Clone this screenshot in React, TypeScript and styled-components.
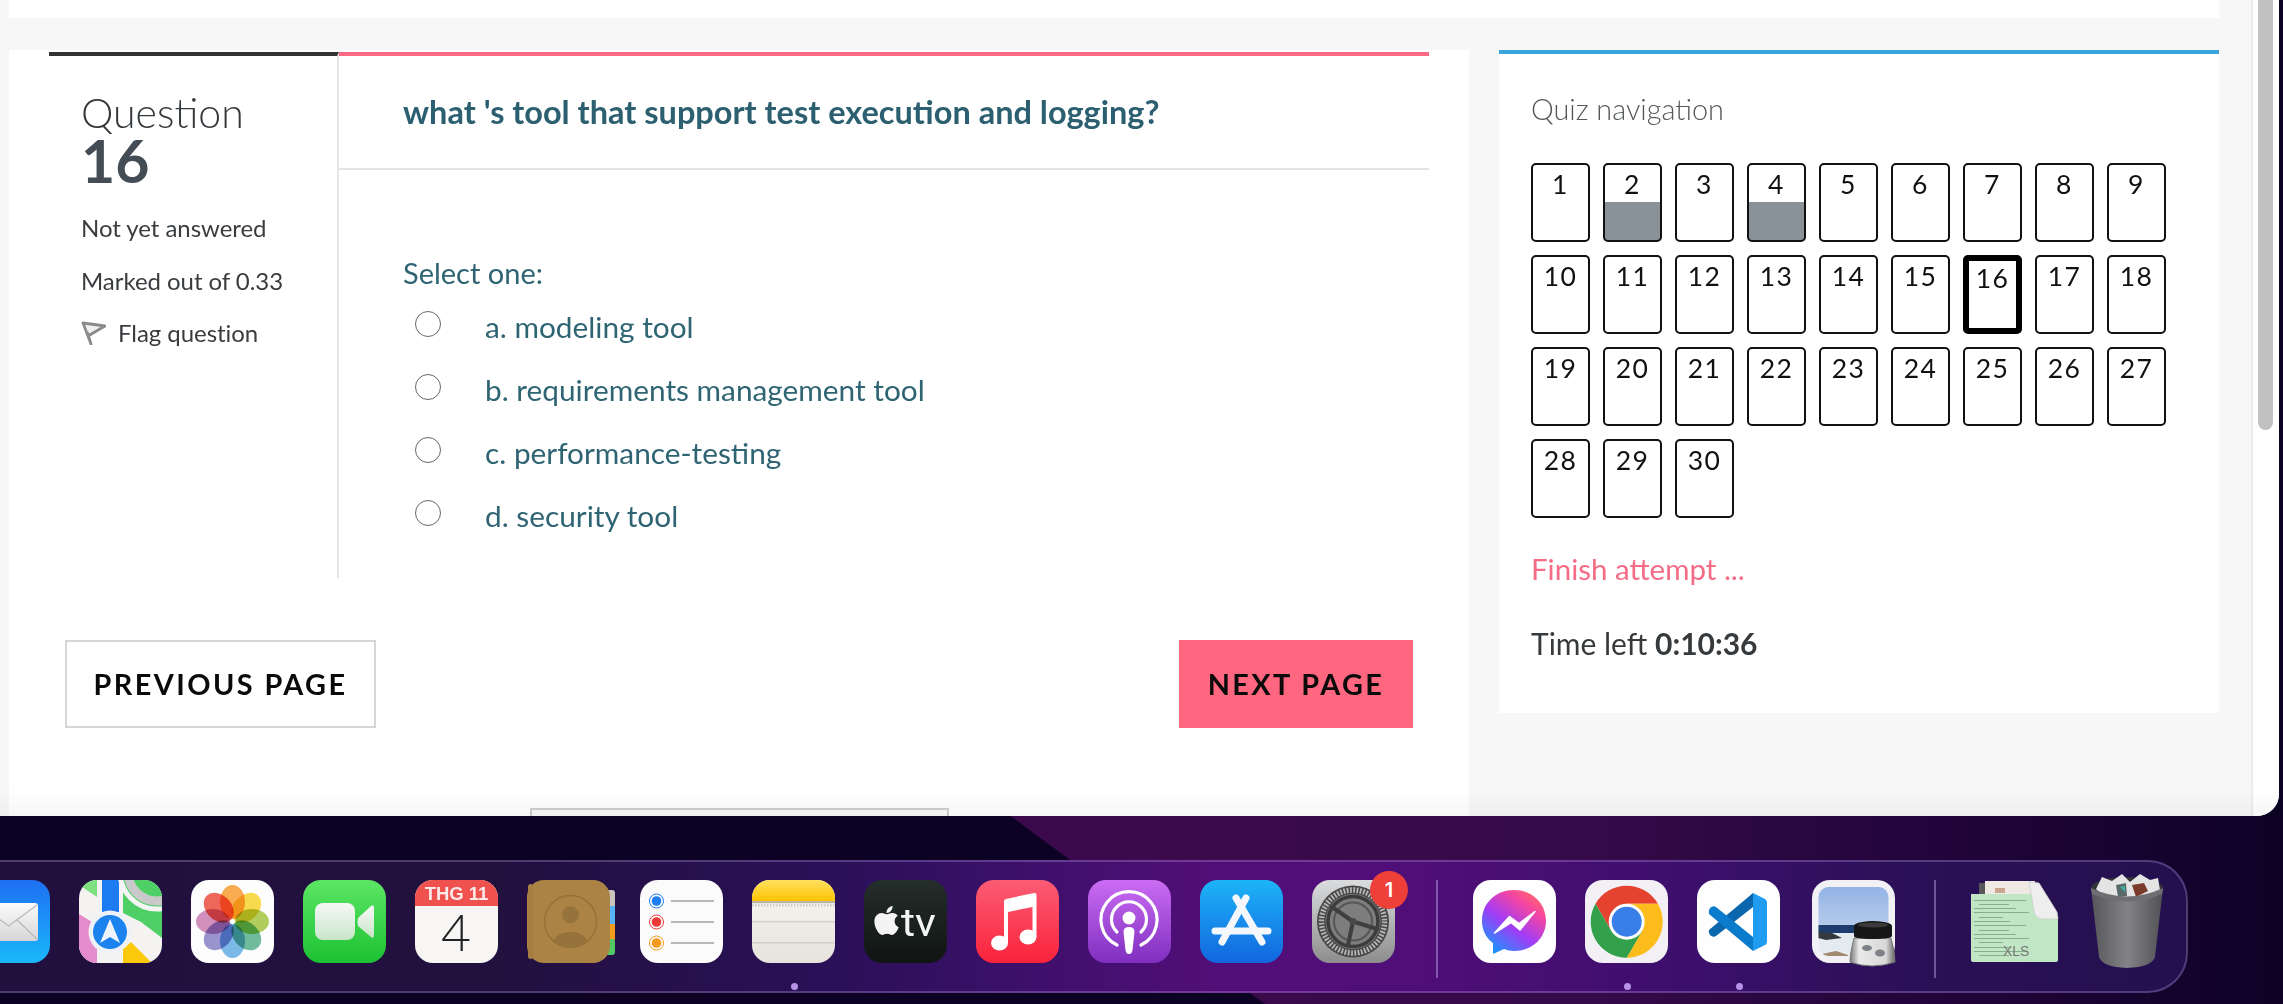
import React from "react";
import styled, { createGlobalStyle } from "styled-components";

const Global = createGlobalStyle`
  html, body { margin: 0; padding: 0; overflow: hidden; background: #0b0224; }
  body { font-family: Lato, "Liberation Sans", sans-serif; }
  * { box-sizing: border-box; }
`;

const Screen = styled.div`
  width: 2283px; height: 1004px; display: flex; flex-direction: column; overflow: hidden;
`;
const Browser = styled.div`
  position: relative; width: 2279px; height: 816px; flex: none; display: flex; overflow: hidden;
  border-bottom-right-radius: 22px; background: #f7f7f7;
  &::after {
    content: ""; position: absolute; left: 0; right: 0; bottom: 0; height: 26px; pointer-events: none;
    background: linear-gradient(rgba(0,0,0,0), rgba(0,0,0,.035));
  }
`;
const Page = styled.div`
  flex: 1; min-width: 0; padding: 0 32px 0 9px; display: flex; flex-direction: column; gap: 32px;
`;
const TopStrip = styled.div`height: 18px; background: #fff; flex: none;`;
const Columns = styled.div`flex: 1; min-height: 0; display: flex; gap: 30px; align-items: flex-start;`;
const Gutter = styled.div`width: 28px; flex: none; background: #fff; border-left: 2px solid #ececec; padding-left: 5px;`;
const Thumb = styled.div`width: 15px; height: 430px; background: #c1c1c1; border-radius: 0 0 8px 8px;`;

const MainCard = styled.main`
  width: 1460px; height: 766px; flex: none; background: #fff; overflow: hidden; padding: 2px 40px 0 40px;
`;
const Question = styled.section`display: flex; height: 526px;`;
const Info = styled.aside`
  width: 290px; flex: none; border-top: 4px solid #333; border-right: 2px solid #e6e6e6;
  padding: 37px 0 0 32px; color: #373a3c;
`;
const QLabel = styled.div`font-size: 41px; font-weight: 300; line-height: 40px; color: #33383c;`;
const QNumber = styled.div`font-size: 59px; font-weight: 700; line-height: 56px; color: #444c55; margin-bottom: 24px;`;
const Meta = styled.div`font-size: 24px; line-height: 30px; letter-spacing: -.05px; margin-bottom: 22.5px; display: flex; align-items: center; gap: 12px; color: #3a3d40; white-space: nowrap;`;
const Body = styled.div`flex: 1; min-width: 0; display: flex; flex-direction: column; border-top: 4px solid #fb6a82;`;
const QTitle = styled.h2`
  margin: 0; height: 114px; flex: none; padding: 38px 0 0 64px; border-bottom: 2px solid #e3e3e3;
  font-size: 32.5px; line-height: 36px; font-weight: 700; color: #2c6070; white-space: nowrap;
`;
const Answer = styled.div`padding: 85px 0 0 64px; color: #2f6473;`;
const Prompt = styled.div`font-size: 29px; line-height: 36px; margin-bottom: 4px;`;
const Choice = styled.label`display: flex; height: 63px; align-items: center; font-size: 29.8px;`;
const Radio = styled.input`
  appearance: none; width: 26px; height: 26px; margin: -5px 44px 0 12px; flex: none;
  border: 1.5px solid #666; border-radius: 50%; background: #fff;
`;
const Actions = styled.div`display: flex; justify-content: space-between; padding: 0 16px 0 16px; margin-top: 62px;`;
const ActionButton = styled.button<{ $primary?: boolean }>`
  height: 88px; padding: 0; font-family: inherit; font-size: 28.8px; font-weight: 700; letter-spacing: 2.45px; color: #0a0a0a;
  width: ${(p) => (p.$primary ? "234px" : "311px")};
  border: ${(p) => (p.$primary ? "none" : "2px solid #d6d6d6")};
  background: ${(p) => (p.$primary ? "#ff667f" : "#fff")};
`;
const PeekBox = styled.div`
  width: 419px; height: 40px; margin: 80px auto 0; border: 2px solid #cfcfcf; background: #f8f8f8;
`;

const NavCard = styled.aside`
  width: 720px; height: 663px; flex: none; background: #fff; border-top: 4px solid #3aa4dc; padding: 37px 0 0 32px;
`;
const NavTitle = styled.h3`margin: 0 0 36px; font-size: 28.8px; line-height: 36px; font-weight: 300; color: #55595c;`;
const NavGrid = styled.div`display: grid; grid-template-columns: repeat(9, 59px); gap: 13px;`;
const NavCell = styled.div<{ $state?: "done" | "current" }>`
  height: 79px; text-align: center; font-size: 26.5px; line-height: 34px; letter-spacing: 1.5px; color: #111; border-radius: 5px;
  padding-top: ${(p) => (p.$state === "current" ? "0" : "2px")};
  margin: 0;
  border: ${(p) => (p.$state === "current" ? "6px solid #000" : "2px solid #111")};
  background: ${(p) => (p.$state === "done" ? "linear-gradient(#fff 50%, #8a9299 50%)" : "#fff")};
`;
const FinishLink = styled.a`display: block; margin-top: 33px; font-size: 29.5px; line-height: 36px; color: #f56c86;`;
const TimeLeft = styled.div`margin-top: 38px; font-size: 30px; line-height: 36px; color: #373a3c; b { font-weight: 700; }`;

const Wallpaper = styled.div`
  flex: 1; min-height: 0; display: flex; justify-content: flex-end; padding: 44px 95px 0 0; overflow: hidden;
  background:
    linear-gradient(36.5deg, #0b0224 49.8%, rgba(11,2,36,0) 49.9%),
    linear-gradient(90deg, #3a0a4a 0%, #3c0a4c 50%, #340a48 70%, #1f0438 87%, #0e0226 100%);
`;
const Dock = styled.div`
  flex: none; height: 133px; display: flex; gap: 29px; align-items: flex-start; padding: 18px 22px 0 24px;
  border: 2px solid rgba(190,160,230,.3); border-right-width: 2px; border-radius: 0 40px 40px 0;
  background: linear-gradient(90deg, #21103d 0, #22103f 25%, #2a1058 40%, #3a1068 47%, #520e78 57%, #4f0e78 66%, #3c0f6c 78%, #2a1056 88%, #24104e 100%);
`;
const Slot = styled.div<{ $w?: number; $shift?: number }>`
  position: relative; flex: none; height: 83px; width: ${(p) => p.$w ?? 83}px; margin-left: ${(p) => p.$shift ?? 0}px;
  svg { display: block; overflow: visible; }
`;
const RunDot = styled.span`
  position: absolute; left: 50%; top: 103px; width: 7px; height: 7px; margin-left: -3px; border-radius: 50%; background: #b592e6;
`;
const Badge = styled.span`
  position: absolute; right: -13px; top: -9px; width: 38px; height: 38px; border-radius: 50%; background: #ee3f39;
  color: #fff; font: 600 20px/38px Inter, "Liberation Sans", sans-serif; text-align: center;
`;
const DockRule = styled.div<{ $before: number; $after: number }>`
  flex: none; width: 2px; height: 98px; margin: 0 ${(p) => p.$after - 29}px 0 ${(p) => p.$before - 29}px; background: rgba(200,170,240,.45);
`;

const Ico: React.FC<{ w?: number; h?: number; box?: string; children: React.ReactNode }> = ({ w = 83, h = 83, box, children }) => (
  <svg width={w} height={h} viewBox={box ?? `0 0 ${w} ${h}`} xmlns="http://www.w3.org/2000/svg">{children}</svg>
);

const Mail = () => (
  <Ico>
    <defs>
      <linearGradient id="mailG" x1="0" y1="0" x2="0" y2="1"><stop offset="0" stopColor="#1e6ff2" /><stop offset="1" stopColor="#1ab8fb" /></linearGradient>
      <linearGradient id="mailE" x1="0" y1="0" x2="0" y2="1"><stop offset="0" stopColor="#fbfbfb" /><stop offset="1" stopColor="#d6d6d6" /></linearGradient>
    </defs>
    <rect width="83" height="83" rx="18" fill="url(#mailG)" />
    <rect x="12" y="23" width="59" height="38" rx="3" fill="url(#mailE)" />
    <path d="M13 25 L41.5 46 L70 25 M13 59 L33 40 M70 59 L50 40" fill="none" stroke="#b8b8b8" strokeWidth="1.2" />
  </Ico>
);

const Maps = () => (
  <Ico>
    <defs><clipPath id="mapC"><rect width="83" height="83" rx="18" /></clipPath></defs>
    <g clipPath="url(#mapC)">
      <rect width="83" height="83" fill="#f4f3f2" />
      <path d="M0 0 H18 V17 L0 5 Z" fill="#7ee07f" />
      <path d="M44 0 H83 V58 L62 42 L44 33 Z" fill="#4fd066" />
      <path d="M0 34 L18 45 V83 H0 Z" fill="#e48bcb" />
      <path d="M44 69 L52 62 L73 83 H44 Z" fill="#fdc90c" />
      <path d="M23 0 H40 V32 H23 Z" fill="#1d7bf2" />
      <circle cx="78" cy="-8" r="29" fill="none" stroke="#c9c9c9" strokeWidth="9" />
      <circle cx="78" cy="-8" r="37" fill="none" stroke="#f5f5f5" strokeWidth="5" />
      <circle cx="31" cy="52" r="21.5" fill="#eef2f6" />
      <circle cx="31" cy="52" r="17" fill="#1c82ee" />
      <path d="M31 39 L41 63 L31 57 L21 63 Z" fill="#eef4fb" />
    </g>
  </Ico>
);

const Photos = () => {
  const petals = ["#f9a23e", "#f8d63c", "#a9c94a", "#5fb490", "#6cb2e4", "#8f88c9", "#cb84b4", "#ee5548"];
  return (
    <Ico>
      <rect width="83" height="83" rx="18" fill="#fdfdfd" />
      <g style={{ isolation: "isolate" }}>
        {petals.map((c, i) => (
          <ellipse key={c} cx="41.5" cy="22" rx="12.5" ry="17" fill={c} opacity=".9"
            style={{ mixBlendMode: "multiply" }} transform={`rotate(${i * 45} 41.5 41.5)`} />
        ))}
      </g>
      <circle cx="41.5" cy="41.5" r="1.4" fill="#fff" />
    </Ico>
  );
};

const FaceTime = () => (
  <Ico>
    <defs>
      <linearGradient id="ftG" x1="0" y1="0" x2="0" y2="1"><stop offset="0" stopColor="#5ce664" /><stop offset="1" stopColor="#1cc133" /></linearGradient>
      <linearGradient id="ftW" x1="0" y1="0" x2="0" y2="1"><stop offset="0" stopColor="#f8f8f8" /><stop offset="1" stopColor="#c8e6c8" /></linearGradient>
    </defs>
    <rect width="83" height="83" rx="18" fill="url(#ftG)" />
    <rect x="12" y="23" width="40" height="37" rx="8" fill="url(#ftW)" />
    <path d="M55 38 L68 26 Q71 24 71 28 V55 Q71 59 68 57 L55 46 Q54 42 55 38 Z" fill="url(#ftW)" />
  </Ico>
);

const Calendar = () => (
  <Ico>
    <defs><clipPath id="calC"><rect width="83" height="83" rx="18" /></clipPath></defs>
    <g clipPath="url(#calC)">
      <rect width="83" height="83" fill="#f7f6f4" />
      <rect width="83" height="26" fill="#ef524e" />
    </g>
    <text x="41.5" y="20" textAnchor="middle" fontFamily="Liberation Sans, sans-serif" fontWeight="700" fontSize="18.5" fill="#fbeaea">THG 11</text>
    <text x="41" y="71" textAnchor="middle" fontFamily="Lato, sans-serif" fontWeight="300" fontSize="52" fill="#222">4</text>
  </Ico>
);

const Contacts = () => (
  <Ico w={88}>
    <rect x="78" y="10" width="10" height="18" rx="3" fill="#c9c5bd" />
    <rect x="78" y="26" width="10" height="20" fill="#58b2f3" />
    <rect x="78" y="44" width="10" height="16" fill="#f29b1d" />
    <rect x="78" y="59" width="10" height="16" rx="3" fill="#52c766" />
    <rect width="83" height="83" rx="17" fill="#ab8445" />
    <rect x="1" y="4" width="5" height="75" rx="2.5" fill="#a57f41" />
    <circle cx="43.5" cy="41.5" r="26" fill="none" stroke="#957239" strokeWidth="1.5" />
    <circle cx="43.5" cy="35" r="8.5" fill="#96733a" />
    <path d="M27 61 C30 49 57 49 60 61 A26 26 0 0 1 27 61 Z" fill="#96733a" />
  </Ico>
);

const Reminders = () => (
  <Ico>
    <rect width="83" height="83" rx="18" fill="#fbfbfb" />
    {[["#1c7ef2", 21], ["#ee3a35", 42], ["#f59a1c", 63]].map(([c, y]) => (
      <g key={c as string}>
        <circle cx="16.5" cy={y as number} r="7" fill="#fff" stroke={c as string} strokeWidth="1" />
        <circle cx="16.5" cy={y as number} r="4.8" fill={c as string} />
        <rect x="31" y={(y as number) - 1} width="43" height="2" fill="#b8b8b8" />
      </g>
    ))}
  </Ico>
);

const Notes = () => (
  <Ico>
    <defs>
      <clipPath id="noC"><rect width="83" height="83" rx="18" /></clipPath>
      <linearGradient id="noY" x1="0" y1="0" x2="0" y2="1"><stop offset="0" stopColor="#ffe060" /><stop offset="1" stopColor="#fdc400" /></linearGradient>
      <linearGradient id="noP" x1="0" y1="0" x2="0" y2="1"><stop offset="0" stopColor="#f9f7f3" /><stop offset="1" stopColor="#e6e2dc" /></linearGradient>
    </defs>
    <g clipPath="url(#noC)">
      <rect width="83" height="83" fill="url(#noP)" />
      <rect width="83" height="21" fill="url(#noY)" />
      <rect y="21" width="83" height="2" fill="#b9b4a8" />
      <line x1="0" x2="83" y1="25" y2="25" stroke="#cfcbc4" strokeWidth="3" strokeDasharray="1.5 1.5" />
      <rect y="41" width="83" height="1.5" fill="#d6d3cd" />
      <rect y="62" width="83" height="1.5" fill="#d2cfc9" />
    </g>
  </Ico>
);

const AppleTv = () => (
  <Ico>
    <defs><linearGradient id="tvG" x1="0" y1="0" x2="0" y2="1"><stop offset="0" stopColor="#242e2b" /><stop offset="1" stopColor="#101413" /></linearGradient></defs>
    <rect width="83" height="83" rx="18" fill="url(#tvG)" />
    <svg x="10" y="24" width="25" height="33" viewBox="0 0 384 512">
      <path fill="#f4f4f4" d="M318.7 268.7c-.2-36.7 16.4-64.4 50-84.8-18.8-26.9-47.2-41.7-84.7-44.6-35.5-2.8-74.3 20.7-88.5 20.7-15 0-49.4-19.7-76.4-19.7C63.3 141.2 4 184.8 4 273.5q0 39.3 14.4 81.2c12.8 36.7 59 126.7 107.2 125.2 25.2-.6 43-17.9 75.8-17.9 31.8 0 48.3 17.9 76.4 17.9 48.6-.7 90.4-82.5 102.6-119.3-65.2-30.7-61.7-90-61.7-91.9zm-56.6-164.2c27.3-32.4 24.8-61.9 24-72.5-24.1 1.4-52 16.4-67.9 34.9-17.5 19.8-27.8 44.3-25.6 71.9 26.1 2 49.9-11.4 69.5-34.3z" />
    </svg>
    <text x="37" y="56" fontFamily="Roboto, sans-serif" fontWeight="400" fontSize="39" fill="#f4f4f4" textLength="35" lengthAdjust="spacingAndGlyphs">tv</text>
  </Ico>
);

const Music = () => (
  <Ico>
    <defs><linearGradient id="muG" x1="0" y1="0" x2="0" y2="1"><stop offset="0" stopColor="#fb5c74" /><stop offset="1" stopColor="#fa233b" /></linearGradient></defs>
    <rect width="83" height="83" rx="18" fill="url(#muG)" />
    <path d="M28 21 Q28 19.5 30 19 L58 13 Q60.5 12.6 60.5 15 V57 H56.5 V27 L32 32 V63 H28 Z" fill="#fff" />
    <ellipse cx="23.5" cy="63" rx="8.5" ry="7.5" fill="#fff" />
    <ellipse cx="52" cy="57" rx="8.5" ry="7.5" fill="#fff" />
  </Ico>
);

const Podcasts = () => (
  <Ico>
    <defs><linearGradient id="poG" x1="0" y1="0" x2="0" y2="1"><stop offset="0" stopColor="#cb6cf3" /><stop offset="1" stopColor="#7f2fc0" /></linearGradient></defs>
    <rect width="83" height="83" rx="18" fill="url(#poG)" />
    <g fill="none" stroke="#fff" strokeWidth="3.2" strokeLinecap="round">
      <path d="M29 65 A28 28 0 1 1 53 65" />
      <path d="M29 52 A17.5 17.5 0 1 1 53 52" />
    </g>
    <circle cx="41" cy="38" r="6.5" fill="#fff" />
    <path d="M35.5 52 Q35.5 47 41 47 Q46.5 47 46.5 52 L44.5 70 Q44 74 41 74 Q38 74 37.5 70 Z" fill="#fff" />
  </Ico>
);

const AppStore = () => (
  <Ico>
    <defs><linearGradient id="asG" x1="0" y1="0" x2="0" y2="1"><stop offset="0" stopColor="#1db4f8" /><stop offset="1" stopColor="#1266de" /></linearGradient></defs>
    <rect width="83" height="83" rx="18" fill="url(#asG)" />
    <g stroke="#f4f8fd" strokeWidth="7" strokeLinecap="round">
      <line x1="46" y1="18" x2="22" y2="62" />
      <line x1="36" y1="18" x2="62" y2="62" />
      <line x1="15" y1="51" x2="68" y2="51" />
    </g>
  </Ico>
);

const Settings = () => (
  <Ico>
    <defs>
      <linearGradient id="seG" x1="0" y1="0" x2="0" y2="1"><stop offset="0" stopColor="#dadcdd" /><stop offset="1" stopColor="#8d8d8d" /></linearGradient>
    </defs>
    <rect width="83" height="83" rx="18" fill="url(#seG)" />
    <circle cx="41" cy="41.5" r="36" fill="#474747" />
    <circle cx="41" cy="41.5" r="31.5" fill="none" stroke="#b5b5b5" strokeWidth="5.5" strokeDasharray="1.8 1.5" />
    <circle cx="41" cy="41.5" r="27.5" fill="#7d7d7d" />
    <circle cx="41" cy="41.5" r="25" fill="none" stroke="#3c3c3c" strokeWidth="3.5" />
    <circle cx="41" cy="41.5" r="19" fill="none" stroke="#555" strokeWidth="2" />
    <g stroke="#3f3f3f" strokeWidth="4" strokeLinecap="round">
      <line x1="41" y1="41.5" x2="20" y2="27" />
      <line x1="41" y1="41.5" x2="65" y2="49" />
      <line x1="41" y1="41.5" x2="36" y2="65" />
    </g>
    <circle cx="41" cy="41.5" r="3.5" fill="#4a4a4a" />
  </Ico>
);

const Messenger = () => (
  <Ico>
    <defs><linearGradient id="meG" x1="0.15" y1="1" x2="0.85" y2="0.05"><stop offset="0" stopColor="#0a9dff" /><stop offset="0.45" stopColor="#a23cf6" /><stop offset="0.8" stopColor="#f6469f" /><stop offset="1" stopColor="#ff6a6a" /></linearGradient></defs>
    <rect width="83" height="83" rx="18" fill="#fefefe" />
    <path d="M41 10 C23 10 9 23 9 41 C9 50 13 58 20 63 V74 L31 69 C34 70 37 71 41 71 C59 71 73 58 73 41 C73 23 59 10 41 10 Z" fill="url(#meG)" />
    <path d="M21.5 53 L36.5 36.5 L46 43.5 L62 31.5 L47 50 L38 42.5 Z" fill="#fff" strokeLinejoin="round" stroke="#fff" strokeWidth="1.5" />
  </Ico>
);

const Chrome = () => (
  <Ico>
    <rect width="83" height="83" rx="18" fill="#f2f0f5" />
    <path d="M10.5 23.7 A36 36 0 0 1 72.9 23.7 L41.7 23.7 L26.1 50.7 Z" fill="#e5432f" />
    <path d="M72.9 23.7 A36 36 0 0 1 41.7 77.7 L57.3 50.7 L41.7 23.7 Z" fill="#fbbc1c" />
    <path d="M41.7 77.7 A36 36 0 0 1 10.5 23.7 L26.1 50.7 L57.3 50.7 Z" fill="#33a04b" />
    <circle cx="41.7" cy="41.7" r="18" fill="#fff" />
    <circle cx="41.7" cy="41.7" r="15" fill="#3a7ee8" />
  </Ico>
);

const Code = () => (
  <Ico>
    <rect width="83" height="83" rx="18" fill="#fefefe" />
    <path d="M12 50 L56 13 V27 L19 56 Q16 58 13 55 Q11 52 12 50 Z" fill="#0a66ad" />
    <path d="M12 34 L56 71 V57 L19 27 Q16 25 13 28 Q11 31 12 34 Z" fill="#0b7bcb" />
    <path d="M56 13 L68 19 Q70 20 70 23 V61 Q70 64 68 65 L56 71 Z" fill="#1f9bef" />
  </Ico>
);

const Preview = () => (
  <Ico>
    <defs>
      <clipPath id="prC"><rect x="6.5" y="7" width="70" height="69" rx="10" /></clipPath>
      <linearGradient id="prS" x1="0" y1="0" x2="0" y2="1"><stop offset="0" stopColor="#94b4e6" /><stop offset="1" stopColor="#b4caea" /></linearGradient>
      <linearGradient id="prJ" x1="0" y1="0" x2="1" y2="0"><stop offset="0" stopColor="#777" /><stop offset=".2" stopColor="#e9e9e9" /><stop offset=".8" stopColor="#d8d8d8" /><stop offset="1" stopColor="#666" /></linearGradient>
    </defs>
    <rect width="83" height="83" rx="18" fill="#f1f1f5" />
    <g clipPath="url(#prC)">
      <rect x="6" y="7" width="71" height="38" fill="url(#prS)" />
      <rect x="6" y="45" width="71" height="8" fill="#1d3c6d" />
      <rect x="6" y="53" width="71" height="24" fill="#e4ebf0" />
      <path d="M6 52 L20 53 L30 58 L14 60 L6 58 Z" fill="#33393d" />
      <path d="M10 74 L24 71 L36 75 V77 H10 Z" fill="#a08a70" />
    </g>
    <path d="M42 58 Q38 74 38 82 Q60 90 83 82 Q83 72 79 58 Z" fill="url(#prJ)" stroke="#777" strokeWidth="1" />
    <ellipse cx="55" cy="68" rx="5" ry="3" fill="#7c8188" />
    <ellipse cx="68" cy="73" rx="5" ry="3.5" fill="#7c8188" />
    <path d="M42 46 Q42 42 60 41 Q80 42 80 46 V56 Q80 59 60 59 Q42 59 42 56 Z" fill="#171717" />
    <ellipse cx="61" cy="45" rx="15" ry="2.4" fill="#3b3b3b" />
  </Ico>
);

const XlsFile = () => {
  const rows = [20, 24, 28, 32, 37, 41, 45, 50, 54, 58, 62, 67, 71, 75];
  return (
    <Ico w={87} h={83}>
      <rect x="8" y="3" width="8" height="14" fill="#55575a" />
      <rect x="14" y="1" width="50" height="16" fill="#eee9e2" />
      <rect x="24" y="8" width="10" height="5" fill="#c9a58e" />
      <path d="M0 14 H68 L87 38 V80 Q87 82 85 82 H2 Q0 82 0 80 Z" fill="#c0e6c4" />
      {rows.map((y, i) => (
        <rect key={y} x={i % 3 === 1 ? 8 : 3} y={y} width={[52, 30, 42, 55, 24, 36][i % 6]} height="1" fill="#86ad8e" />
      ))}
      <path d="M58 2 L68 3 L86 32 L87 39 L72 39 Q63 38 63 30 Z" fill="#eeeeee" stroke="#cfcfcf" strokeWidth=".8" />
      <text x="32" y="76" fontFamily="Liberation Sans, sans-serif" fontSize="14" fill="#777">XLS</text>
    </Ico>
  );
};

const Trash = () => (
  <Ico w={74} h={83} box="0 7 74 83">
    <defs>
      <linearGradient id="trG" x1="0" y1="0" x2="1" y2="0"><stop offset="0" stopColor="#55555a" /><stop offset=".5" stopColor="#838387" /><stop offset="1" stopColor="#505055" /></linearGradient>
    </defs>
    <path d="M1 15 Q37 30 73 15 L65 84 Q62 94 37 95 Q12 94 9 84 Z" fill="url(#trG)" />
    <ellipse cx="37" cy="15" rx="36" ry="11" fill="#333338" />
    <path d="M6 16 L12 4 L22 8 L32 1 L40 9 L50 1 L60 7 L68 5 L70 17 L54 25 L34 27 L14 24 Z" fill="#e4e4e4" />
    <path d="M26 12 L36 10 L37 23 L28 24 Z" fill="#5a6a6a" />
    <path d="M42 12 L54 10 L58 18 L46 24 Z" fill="#7a3b2c" />
    <path d="M30 14 L35 13 L35 19 Z" fill="#3fb3a5" />
    <path d="M1 15 Q37 32 73 15 L72 21 Q37 36 2 21 Z" fill="#6e6e73" />
  </Ico>
);

const FlagIcon = () => (
  <svg width="25" height="24" viewBox="0 0 25 24" xmlns="http://www.w3.org/2000/svg">
    <path d="M2 2 L10 23 L6.5 12 L7 15 L24 5 Z" fill="#f1f1f1" stroke="#8a8a8a" strokeWidth="2.8" strokeLinejoin="round" />
  </svg>
);

const options = ["a. modeling tool", "b. requirements management tool", "c. performance-testing", "d. security tool"];
const cells = Array.from({ length: 30 }, (_, i) => i + 1);

export default function App() {
  return (
    <Screen>
      <Global />
      <Browser>
        <Page>
          <TopStrip />
          <Columns>
            <MainCard>
              <Question>
                <Info>
                  <QLabel>Question</QLabel>
                  <QNumber>16</QNumber>
                  <Meta>Not yet answered</Meta>
                  <Meta>Marked out of 0.33</Meta>
                  <Meta><FlagIcon />Flag question</Meta>
                </Info>
                <Body>
                  <QTitle>what 's tool that support test execution and logging?</QTitle>
                  <Answer>
                    <Prompt>Select one:</Prompt>
                    {options.map((o) => (
                      <Choice key={o}><Radio type="radio" name="answer" />{o}</Choice>
                    ))}
                  </Answer>
                </Body>
              </Question>
              <Actions>
                <ActionButton>PREVIOUS PAGE</ActionButton>
                <ActionButton $primary>NEXT PAGE</ActionButton>
              </Actions>
              <PeekBox />
            </MainCard>
            <NavCard>
              <NavTitle>Quiz navigation</NavTitle>
              <NavGrid>
                {cells.map((n) => (
                  <NavCell key={n} $state={n === 16 ? "current" : n === 2 || n === 4 ? "done" : undefined}>{n}</NavCell>
                ))}
              </NavGrid>
              <FinishLink>Finish attempt ...</FinishLink>
              <TimeLeft>Time left <b>0:10:36</b></TimeLeft>
            </NavCard>
          </Columns>
        </Page>
        <Gutter><Thumb /></Gutter>
      </Browser>
      <Wallpaper>
        <Dock>
          <Slot><Mail /></Slot>
          <Slot><Maps /></Slot>
          <Slot><Photos /></Slot>
          <Slot><FaceTime /></Slot>
          <Slot><Calendar /></Slot>
          <Slot $w={84}><Contacts /></Slot>
          <Slot><Reminders /></Slot>
          <Slot><Notes /><RunDot /></Slot>
          <Slot><AppleTv /></Slot>
          <Slot><Music /></Slot>
          <Slot><Podcasts /></Slot>
          <Slot><AppStore /></Slot>
          <Slot><Settings /><Badge>1</Badge></Slot>
          <DockRule $before={41} $after={35} />
          <Slot><Messenger /></Slot>
          <Slot><Chrome /><RunDot /></Slot>
          <Slot><Code /><RunDot /></Slot>
          <Slot $shift={3}><Preview /></Slot>
          <DockRule $before={39} $after={35} />
          <Slot $w={87}><XlsFile /></Slot>
          <Slot $w={74} $shift={3}><Trash /></Slot>
        </Dock>
      </Wallpaper>
    </Screen>
  );
}
